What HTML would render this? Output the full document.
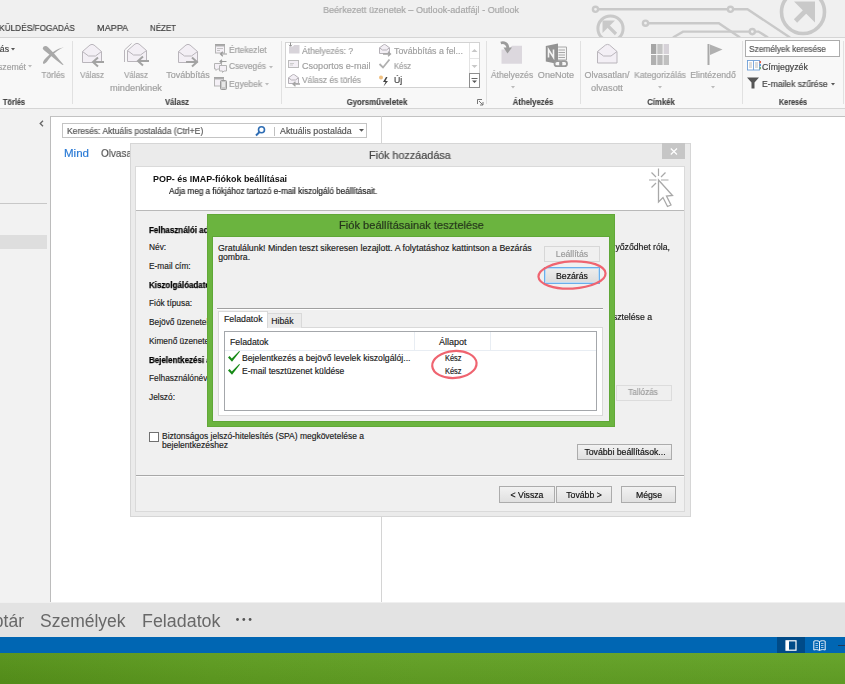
<!DOCTYPE html>
<html><head><meta charset="utf-8">
<style>
html,body{margin:0;padding:0;}
body{width:845px;height:684px;overflow:hidden;position:relative;background:#f0f0f0;font-family:"Liberation Sans", sans-serif;}
.t{position:absolute;white-space:nowrap;line-height:1;will-change:transform;}
.k{-webkit-text-stroke:0.25px currentColor}
svg{overflow:visible}
</style></head><body>
<div style="position:absolute;left:0px;top:0px;width:845px;height:37px;background:#f0f0f0"></div>
<svg style="position:absolute;left:0px;top:0px;" width="845" height="37" viewBox="0 0 845 37">
<g fill="none" stroke="#c9c9c9" stroke-width="2.4">
<path d="M598 9.3 H728"/><circle cx="595.5" cy="9.3" r="2.6"/>
<path d="M733 9.3 H747.5 L790 37.5"/><circle cx="730.5" cy="9.3" r="2.6"/>
<path d="M648 23.2 H718.8 L740 37.5"/><circle cx="645.5" cy="23.2" r="2.6"/>
<path d="M673 37.5 L683 31.6 H749.5"/><path d="M755 31.6 H758.5 L768 37.5"/><circle cx="752.3" cy="31.6" r="2.6"/>
<circle cx="610.5" cy="28.5" r="12.6" stroke-width="3"/>
<circle cx="803" cy="12" r="21.5" stroke-width="3.6"/>
</g>
<g fill="#c9c9c9">
<path d="M602.5 20.5 H615 L602.5 33 Z"/><path d="M606 24 L616 34" stroke="#c9c9c9" stroke-width="3.2"/>
<path d="M794 1.5 H815 V22.5 Z"/><path d="M807 9.5 L795.5 21" stroke="#c9c9c9" stroke-width="4.6"/>
</g></svg>
<div class="t" style="left:121.30000000000001px;width:600px;text-align:center;top:5.55px;font-size:9.1px;color:#a6a6a6;font-weight:normal;-webkit-text-stroke:0.18px #a6a6a6;transform:scaleX(0.9987);transform-origin:center 0;">Beérkezett üzenetek – Outlook-adatfájl - Outlook</div>
<div class="t" style="left:-525.5px;width:600px;text-align:right;top:24.46px;font-size:9.2px;color:#3c3c3c;font-weight:normal;-webkit-text-stroke:0.18px #3c3c3c;transform:scaleX(0.9010);transform-origin:right 0;">KÜLDÉS/FOGADÁS</div>
<div class="t" style="left:96.6px;top:24.46px;font-size:9.2px;color:#3c3c3c;font-weight:normal;-webkit-text-stroke:0.18px #3c3c3c;transform:scaleX(0.9896);transform-origin:left 0;">MAPPA</div>
<div class="t" style="left:149.6px;top:24.46px;font-size:9.2px;color:#3c3c3c;font-weight:normal;-webkit-text-stroke:0.18px #3c3c3c;transform:scaleX(0.8622);transform-origin:left 0;">NÉZET</div>
<div style="position:absolute;left:0px;top:37px;width:845px;height:1px;background:#d5d5d5"></div>
<div style="position:absolute;left:0px;top:38px;width:845px;height:70px;background:#f8f8f8"></div>
<div style="position:absolute;left:0px;top:108px;width:845px;height:1px;background:#d5d5d5"></div>
<div style="position:absolute;left:72px;top:41px;width:1px;height:63px;background:#e1e1e1"></div>
<div style="position:absolute;left:280.5px;top:41px;width:1px;height:63px;background:#e1e1e1"></div>
<div style="position:absolute;left:486px;top:41px;width:1px;height:63px;background:#e1e1e1"></div>
<div style="position:absolute;left:579.5px;top:41px;width:1px;height:63px;background:#e1e1e1"></div>
<div style="position:absolute;left:742px;top:41px;width:1px;height:63px;background:#e1e1e1"></div>
<div style="position:absolute;left:843px;top:41px;width:1px;height:63px;background:#e1e1e1"></div>
<div class="t" style="left:-285.6px;width:600px;text-align:center;top:98.02px;font-size:8.3px;color:#444;font-weight:bold;-webkit-text-stroke:0.15px #444;transform:scaleX(0.8873);transform-origin:center 0;">Törlés</div>
<div class="t" style="left:-123.5px;width:600px;text-align:center;top:98.02px;font-size:8.3px;color:#444;font-weight:bold;-webkit-text-stroke:0.15px #444;transform:scaleX(0.9288);transform-origin:center 0;">Válasz</div>
<div class="t" style="left:77.39999999999998px;width:600px;text-align:center;top:98.02px;font-size:8.3px;color:#444;font-weight:bold;-webkit-text-stroke:0.15px #444;transform:scaleX(0.9413);transform-origin:center 0;">Gyorsműveletek</div>
<div class="t" style="left:232.5px;width:600px;text-align:center;top:98.02px;font-size:8.3px;color:#444;font-weight:bold;-webkit-text-stroke:0.15px #444;transform:scaleX(0.9316);transform-origin:center 0;">Áthelyezés</div>
<div class="t" style="left:360.79999999999995px;width:600px;text-align:center;top:98.02px;font-size:8.3px;color:#444;font-weight:bold;-webkit-text-stroke:0.15px #444;transform:scaleX(0.9347);transform-origin:center 0;">Címkék</div>
<div class="t" style="left:492.5px;width:600px;text-align:center;top:98.02px;font-size:8.3px;color:#444;font-weight:bold;-webkit-text-stroke:0.15px #444;transform:scaleX(0.8668);transform-origin:center 0;">Keresés</div>
<svg style="position:absolute;left:477px;top:99px;" width="7" height="6" viewBox="0 0 7 6"><path d="M0.5 0.5 H5 M0.5 0.5 V5" stroke="#777" fill="none"/><path d="M2 2 L6 6 M6 3 V6 H3" stroke="#777" fill="none"/></svg>
<div class="t" style="left:-590.6px;width:600px;text-align:right;top:45.39px;font-size:8.7px;color:#444;font-weight:normal;-webkit-text-stroke:0.18px #444;">itás</div>
<svg style="position:absolute;left:11px;top:48px;" width="4" height="3" viewBox="0 0 4 3"><path d="M0 0 H4 L2 2.5 Z" fill="#555"/></svg>
<div class="t" style="left:-574.1px;width:600px;text-align:right;top:62.99px;font-size:8.7px;color:#a0a0a0;font-weight:normal;-webkit-text-stroke:0.18px #a0a0a0;">Levélszemét</div>
<svg style="position:absolute;left:28.4px;top:65.3px;" width="4" height="3" viewBox="0 0 4 3"><path d="M0 0 H4 L2 2.5 Z" fill="#bbb"/></svg>
<svg style="position:absolute;left:42px;top:45px;" width="23" height="21" viewBox="0 0 23 21"><path d="M0.8 3.2 C1.5 0.6 4.2 0.4 6.3 2.4 C11 7 16.5 13.5 21.6 19.8 C20.6 20.2 19.8 19.6 18.6 18.6 C13 14 7 9 2.3 5.4 C1.2 4.6 0.7 3.9 0.8 3.2 Z" fill="#a9a9a9"/>
<path d="M21.8 2.2 C16 4.6 9.5 10 5.8 15.6 C4.5 17.8 2 19.6 1.2 18.6 C0.4 17.4 1.6 15.6 3.2 13.8 C8.5 8 15 3.6 21.8 2.2 Z" fill="#a9a9a9"/></svg>
<div class="t" style="left:-246.7px;width:600px;text-align:center;top:70.89px;font-size:8.7px;color:#a0a0a0;font-weight:normal;-webkit-text-stroke:0.18px #a0a0a0;transform:scaleX(0.9639);transform-origin:center 0;">Törlés</div>
<svg style="position:absolute;left:82px;top:44px;" width="26" height="24" viewBox="0 0 26 24"><g transform="translate(0,0)"><path d="M0.5 7.5 L8 1 Q10 -0.3 12 1 L19.5 7.5 V18.5 H0.5 Z" fill="#f3eff5" stroke="#b9b5bb"/>
<path d="M0.5 7.5 L6.5 12 H13.5 L19.5 7.5" fill="none" stroke="#b9b5bb"/></g><path d="M11 18 H22 M16 13.5 L11 18 L16 22.5" stroke="#a3a3a3" stroke-width="2" fill="none"/></svg>
<div class="t" style="left:-208px;width:600px;text-align:center;top:70.89px;font-size:8.7px;color:#a0a0a0;font-weight:normal;-webkit-text-stroke:0.18px #a0a0a0;transform:scaleX(0.9191);transform-origin:center 0;">Válasz</div>
<svg style="position:absolute;left:124px;top:43px;" width="26" height="24" viewBox="0 0 26 24"><path d="M0.5 19 V7 L7.5 0.5" stroke="#b9b5bb" fill="none"/><g transform="translate(3,0)"><path d="M0.5 7.5 L8 1 Q10 -0.3 12 1 L19.5 7.5 V18.5 H0.5 Z" fill="#f3eff5" stroke="#b9b5bb"/>
<path d="M0.5 7.5 L6.5 12 H13.5 L19.5 7.5" fill="none" stroke="#b9b5bb"/></g><path d="M14 18 H25 M19 13.5 L14 18 L19 22.5" stroke="#a3a3a3" stroke-width="2" fill="none"/></svg>
<div class="t" style="left:-164px;width:600px;text-align:center;top:70.89px;font-size:8.7px;color:#a0a0a0;font-weight:normal;-webkit-text-stroke:0.18px #a0a0a0;transform:scaleX(0.9191);transform-origin:center 0;">Válasz</div>
<div class="t" style="left:-164.2px;width:600px;text-align:center;top:83.69px;font-size:8.7px;color:#a0a0a0;font-weight:normal;-webkit-text-stroke:0.18px #a0a0a0;transform:scaleX(1.0646);transform-origin:center 0;">mindenkinek</div>
<svg style="position:absolute;left:178px;top:44px;" width="26" height="24" viewBox="0 0 26 24"><g transform="translate(0,0)"><path d="M0.5 7.5 L8 1 Q10 -0.3 12 1 L19.5 7.5 V18.5 H0.5 Z" fill="#f3eff5" stroke="#b9b5bb"/>
<path d="M0.5 7.5 L6.5 12 H13.5 L19.5 7.5" fill="none" stroke="#b9b5bb"/></g><path d="M8 18 H19 M14 13.5 L19 18 L14 22.5" stroke="#a3a3a3" stroke-width="2" fill="none"/></svg>
<div class="t" style="left:-112.1px;width:600px;text-align:center;top:70.89px;font-size:8.7px;color:#a0a0a0;font-weight:normal;-webkit-text-stroke:0.18px #a0a0a0;transform:scaleX(1.0338);transform-origin:center 0;">Továbbítás</div>
<svg style="position:absolute;left:214px;top:44px;" width="14" height="12" viewBox="0 0 14 12"><rect x="1" y="0" width="10" height="2" fill="#a4a4a4"/><rect x="1.5" y="2" width="9" height="7" fill="#f4f0f6" stroke="#b4b4b4"/><path d="M3 4.5 H9 M3 6.5 H6" stroke="#c4c4c4"/><path d="M6.5 10 H13 M8.8 7.8 L6.5 10 L8.8 12.2" stroke="#9a9a9a" stroke-width="1.2" fill="none"/></svg>
<div class="t" style="left:229px;top:45.99px;font-size:8.7px;color:#a0a0a0;font-weight:normal;-webkit-text-stroke:0.18px #a0a0a0;transform:scaleX(0.9694);transform-origin:left 0;">Értekezlet</div>
<svg style="position:absolute;left:214px;top:60px;" width="14" height="13" viewBox="0 0 14 13"><path d="M0.5 3.5 H7.5 V9 H3.5 L2 10.5 V9 H0.5 Z" fill="#f4f0f6" stroke="#b4b4b4"/><path d="M5.5 5.5 H12.5 V11 H10 L8.5 12.5 V11 H5.5 Z" fill="#f4f0f6" stroke="#b4b4b4"/><path d="M6 1.5 H12.5 M8 -0.3 L6 1.5 L8 3.3" stroke="#9a9a9a" stroke-width="1.2" fill="none"/></svg>
<div class="t" style="left:229px;top:62.49px;font-size:8.7px;color:#a0a0a0;font-weight:normal;-webkit-text-stroke:0.18px #a0a0a0;transform:scaleX(0.9564);transform-origin:left 0;">Csevegés</div>
<svg style="position:absolute;left:268.5px;top:66px;" width="4" height="3" viewBox="0 0 4 3"><path d="M0 0 H4 L2 2.5 Z" fill="#bbb"/></svg>
<svg style="position:absolute;left:214px;top:77px;" width="14" height="13" viewBox="0 0 14 13"><rect x="0" y="0" width="10" height="2" fill="#a4a4a4"/><rect x="0.5" y="2" width="9" height="7" fill="#f4f0f6" stroke="#b4b4b4"/><rect x="6.5" y="3.5" width="6" height="9" rx="1" fill="#c8c8c8" stroke="#9a9a9a"/><rect x="8" y="5" width="3" height="5" fill="#e8e8e8"/></svg>
<div class="t" style="left:229px;top:80.19px;font-size:8.7px;color:#a0a0a0;font-weight:normal;-webkit-text-stroke:0.18px #a0a0a0;transform:scaleX(0.9806);transform-origin:left 0;">Egyebek</div>
<svg style="position:absolute;left:264.5px;top:83px;" width="4" height="3" viewBox="0 0 4 3"><path d="M0 0 H4 L2 2.5 Z" fill="#bbb"/></svg>
<div style="position:absolute;left:285px;top:42px;width:195px;height:46px;background:#fff;border:1px solid #d2d2d2;box-sizing:border-box"></div>
<div style="position:absolute;left:469px;top:43px;width:1px;height:44px;background:#e3e3e3"></div>
<div style="position:absolute;left:470px;top:58px;width:9px;height:1px;background:#e6e6e6"></div>
<div style="position:absolute;left:470px;top:73px;width:9px;height:1px;background:#e6e6e6"></div>
<svg style="position:absolute;left:471px;top:48px;" width="7" height="5" viewBox="0 0 7 5"><path d="M0.5 4 L3.5 1 L6.5 4 Z" fill="#c8c8c8"/></svg>
<svg style="position:absolute;left:471px;top:64px;" width="7" height="5" viewBox="0 0 7 5"><path d="M0.5 1 L3.5 4 L6.5 1 Z" fill="#c8c8c8"/></svg>
<div style="position:absolute;left:469px;top:73px;width:11px;height:15px;border:1px solid #8e8e8e;box-sizing:border-box"></div>
<svg style="position:absolute;left:471px;top:78px;" width="7" height="6" viewBox="0 0 7 6"><path d="M0.5 0.5 H6.5" stroke="#666"/><path d="M1 2.5 L3.5 5 L6 2.5 Z" fill="#555"/></svg>
<svg style="position:absolute;left:288px;top:42px;" width="13" height="12" viewBox="0 0 13 12"><path d="M1 4.5 H5 L6 3 H11.5 V11.5 H1 Z" fill="#d8d4da"/><path d="M2.5 0.5 V4 M1 2.8 L2.5 4.3 L4 2.8" stroke="#888" stroke-width="0.9" fill="none"/></svg>
<div class="t" style="left:302.4px;top:46.69px;font-size:8.7px;color:#a0a0a0;font-weight:normal;-webkit-text-stroke:0.18px #a0a0a0;transform:scaleX(0.9803);transform-origin:left 0;">Áthelyezés: ?</div>
<svg style="position:absolute;left:288px;top:60px;" width="12" height="8" viewBox="0 0 12 8"><rect x="0.5" y="0.5" width="10" height="7" fill="#f3eff5" stroke="#bbb"/><path d="M2 3.5 H6 M2 5 H5" stroke="#ccc"/></svg>
<div class="t" style="left:302.4px;top:61.89px;font-size:8.7px;color:#a0a0a0;font-weight:normal;-webkit-text-stroke:0.18px #a0a0a0;transform:scaleX(1.0433);transform-origin:left 0;">Csoportos e-mail</div>
<svg style="position:absolute;left:288px;top:74px;" width="13" height="12" viewBox="0 0 13 12"><path d="M0.5 3.8 L4.5 0.8 Q5.5 0.2 6.5 0.8 L10.5 3.8 V9.5 H0.5 Z" fill="#f3eff5" stroke="#b5b1b7"/><path d="M0.5 3.8 L3.5 6 H7.5 L10.5 3.8" stroke="#b5b1b7" fill="none"/><path d="M5 10 H12 M7.5 7.8 L5 10 L7.5 12.2" stroke="#a5a5a5" stroke-width="1.3" fill="none"/></svg>
<div class="t" style="left:302.4px;top:76.29px;font-size:8.7px;color:#a0a0a0;font-weight:normal;-webkit-text-stroke:0.18px #a0a0a0;transform:scaleX(0.9608);transform-origin:left 0;">Válasz és törlés</div>
<svg style="position:absolute;left:379px;top:44px;" width="13" height="12" viewBox="0 0 13 12"><path d="M0.5 3.8 L4.5 0.8 Q5.5 0.2 6.5 0.8 L10.5 3.8 V9.5 H0.5 Z" fill="#f3eff5" stroke="#b5b1b7"/><path d="M0.5 3.8 L3.5 6 H7.5 L10.5 3.8" stroke="#b5b1b7" fill="none"/><path d="M4 10 H11.5 M9 7.8 L11.5 10 L9 12.2" stroke="#a5a5a5" stroke-width="1.3" fill="none"/></svg>
<div class="t" style="left:394px;top:46.69px;font-size:8.7px;color:#a0a0a0;font-weight:normal;-webkit-text-stroke:0.18px #a0a0a0;transform:scaleX(1.0119);transform-origin:left 0;">Továbbítás a fel...</div>
<svg style="position:absolute;left:379px;top:59px;" width="11" height="10" viewBox="0 0 11 10"><path d="M0.5 5 L4 8.5 L10.5 0.5" stroke="#b0b0b0" stroke-width="1.8" fill="none"/></svg>
<div class="t" style="left:394px;top:61.89px;font-size:8.7px;color:#a0a0a0;font-weight:normal;-webkit-text-stroke:0.18px #a0a0a0;transform:scaleX(0.8789);transform-origin:left 0;">Kész</div>
<svg style="position:absolute;left:378px;top:75px;" width="13" height="12" viewBox="0 0 13 12"><circle cx="3" cy="2.5" r="2" fill="#f0c080"/><path d="M8 2 L5 7 H7.5 L5.5 11.5 L10 6 H7.5 L9.5 2 Z" fill="#444"/></svg>
<div class="t" style="left:394px;top:76.29px;font-size:8.7px;color:#444;font-weight:normal;-webkit-text-stroke:0.18px #444;">Új</div>
<svg style="position:absolute;left:500px;top:42px;" width="23" height="23" viewBox="0 0 23 23"><path d="M1.5 7.5 H8.5 L12 3.7 H22 V21.7 H1.5 Z" fill="#dcd8de"/><path d="M0.8 1 C4 0 8 1.5 7.8 6.5" stroke="#9c9c9c" stroke-width="2.8" fill="none"/><path d="M3.5 5.5 L12 5.5 L7.5 11.5 Z" fill="#9c9c9c"/></svg>
<div class="t" style="left:211.89999999999998px;width:600px;text-align:center;top:71.39px;font-size:8.7px;color:#a0a0a0;font-weight:normal;-webkit-text-stroke:0.18px #a0a0a0;transform:scaleX(0.9916);transform-origin:center 0;">Áthelyezés</div>
<svg style="position:absolute;left:510.5px;top:86px;" width="4" height="3" viewBox="0 0 4 3"><path d="M0 0 H4 L2 2.5 Z" fill="#bbb"/></svg>
<svg style="position:absolute;left:545px;top:43px;" width="24" height="26" viewBox="0 0 24 26"><path d="M11.5 4 H21.5 V17 H11.5 Z" fill="#f4f4f4" stroke="#a8a8a8"/><path d="M13.5 7 H20 M13.5 9.5 H20 M13.5 12 H20 M13.5 14.5 H20" stroke="#a8a8a8" stroke-width="1.1"/>
<path d="M0.8 3 L13 0.5 V21 L0.8 18.5 Z" fill="#939393"/><path d="M3.5 14.5 V6.5 L8.5 14.5 V6.5" stroke="#f4f4f4" stroke-width="1.6" fill="none"/>
<rect x="9.5" y="18.2" width="7" height="5" rx="2.5" fill="#f8f8f8" stroke="#9a9a9a" stroke-width="1.8"/><rect x="15" y="18.2" width="7" height="5" rx="2.5" fill="none" stroke="#9a9a9a" stroke-width="1.8"/></svg>
<div class="t" style="left:255.79999999999995px;width:600px;text-align:center;top:70.89px;font-size:8.7px;color:#a0a0a0;font-weight:normal;-webkit-text-stroke:0.18px #a0a0a0;transform:scaleX(1.0425);transform-origin:center 0;">OneNote</div>
<svg style="position:absolute;left:597px;top:44px;" width="21" height="20" viewBox="0 0 21 20"><path d="M0.5 7.5 L8.5 1 Q10.5 -0.2 12.5 1 L20 7.5 V19 H0.5 Z" fill="#f3eff5" stroke="#b9b5bb"/><path d="M0.5 7.5 L6.5 12 H14 L20 7.5" fill="none" stroke="#b9b5bb"/></svg>
<div class="t" style="left:307.20000000000005px;width:600px;text-align:center;top:71.39px;font-size:8.7px;color:#a0a0a0;font-weight:normal;-webkit-text-stroke:0.18px #a0a0a0;transform:scaleX(1.0317);transform-origin:center 0;">Olvasatlan/</div>
<div class="t" style="left:307.20000000000005px;width:600px;text-align:center;top:83.69px;font-size:8.7px;color:#a0a0a0;font-weight:normal;-webkit-text-stroke:0.18px #a0a0a0;transform:scaleX(1.0639);transform-origin:center 0;">olvasott</div>
<svg style="position:absolute;left:651px;top:44px;" width="18" height="21" viewBox="0 0 18 21"><rect x="0" y="0" width="5.3" height="10" fill="#a6a6a6"/><rect x="6.3" y="0" width="5.3" height="10" fill="#c4c4c4"/><rect x="12.6" y="0" width="5.4" height="10" fill="#d6d2d8"/>
<rect x="0" y="11" width="5.3" height="10" fill="#b0b0b0"/><rect x="6.3" y="11" width="5.3" height="10" fill="#b8b8b8"/><rect x="12.6" y="11" width="5.4" height="10" fill="#c0c0c0"/></svg>
<div class="t" style="left:360.1px;width:600px;text-align:center;top:71.39px;font-size:8.7px;color:#a0a0a0;font-weight:normal;-webkit-text-stroke:0.18px #a0a0a0;transform:scaleX(0.9827);transform-origin:center 0;">Kategorizálás</div>
<svg style="position:absolute;left:658px;top:86px;" width="4" height="3" viewBox="0 0 4 3"><path d="M0 0 H4 L2 2.5 Z" fill="#bbb"/></svg>
<svg style="position:absolute;left:707px;top:44px;" width="16" height="22" viewBox="0 0 16 22"><rect x="0.5" y="0" width="2" height="21" fill="#a9a9a9"/><path d="M3 0.5 L15.5 5.5 L3 11 Z" fill="#b0b0b0"/></svg>
<div class="t" style="left:413.4px;width:600px;text-align:center;top:71.39px;font-size:8.7px;color:#a0a0a0;font-weight:normal;-webkit-text-stroke:0.18px #a0a0a0;transform:scaleX(1.0029);transform-origin:center 0;">Elintézendő</div>
<svg style="position:absolute;left:711px;top:86px;" width="4" height="3" viewBox="0 0 4 3"><path d="M0 0 H4 L2 2.5 Z" fill="#bbb"/></svg>
<div style="position:absolute;left:745px;top:40px;width:95px;height:17px;background:#fff;border:1px solid #acacac;box-sizing:border-box"></div>
<div class="t" style="left:748.7px;top:45.29px;font-size:8.7px;color:#555;font-weight:normal;-webkit-text-stroke:0.18px #555;transform:scaleX(0.9593);transform-origin:left 0;">Személyek keresése</div>
<svg style="position:absolute;left:747px;top:60px;" width="14" height="11" viewBox="0 0 14 11"><rect x="0.5" y="0.5" width="12" height="9.5" fill="#fff" stroke="#6f9fd8" stroke-width="0.9"/><path d="M6.5 0.5 V10" stroke="#6f9fd8" stroke-width="0.9"/>
<path d="M2 3 H5 M2 5 H5 M2 7 H5 M8 3 H11 M8 5 H11 M8 7 H11" stroke="#b0b0b0" stroke-width="0.9"/><rect x="12.5" y="1" width="1.5" height="2.2" fill="#e06050"/><rect x="12.5" y="4" width="1.5" height="2.2" fill="#5a9ad8"/><rect x="12.5" y="7" width="1.5" height="2.2" fill="#70b070"/></svg>
<div class="t" style="left:762.4px;top:63.09px;font-size:8.7px;color:#444;font-weight:normal;-webkit-text-stroke:0.18px #444;transform:scaleX(1.0100);transform-origin:left 0;">Címjegyzék</div>
<svg style="position:absolute;left:747px;top:77px;" width="13" height="12" viewBox="0 0 13 12"><path d="M0 0.5 H12 L7.5 5.5 V11.5 H4.5 V5.5 Z" fill="#555"/></svg>
<div class="t" style="left:762.4px;top:79.59px;font-size:8.7px;color:#444;font-weight:normal;-webkit-text-stroke:0.18px #444;transform:scaleX(0.9862);transform-origin:left 0;">E-mailek szűrése</div>
<svg style="position:absolute;left:831px;top:83px;" width="4" height="3" viewBox="0 0 4 3"><path d="M0 0 H4 L2 2.5 Z" fill="#555"/></svg>
<div style="position:absolute;left:0px;top:109px;width:845px;height:493px;background:#f2f2f2"></div>
<div style="position:absolute;left:50px;top:116px;width:795px;height:486px;background:#fff;border-left:1px solid #bcbcbc;border-top:1px solid #c2c2c2;box-sizing:border-box"></div>
<svg style="position:absolute;left:39px;top:120px;" width="5" height="7" viewBox="0 0 5 7"><path d="M4 0.8 L1.2 3.5 L4 6.2" stroke="#666" stroke-width="1.3" fill="none"/></svg>
<div style="position:absolute;left:0px;top:203px;width:47px;height:1px;background:#c8c8c8"></div>
<div style="position:absolute;left:0px;top:235px;width:47px;height:14px;background:#dedede"></div>
<div style="position:absolute;left:381px;top:116px;width:1px;height:486px;background:#d4d4d4"></div>
<div style="position:absolute;left:62px;top:123px;width:305px;height:15px;background:#fff;border:1px solid #c4c4c4;box-sizing:border-box"></div>
<div class="t" style="left:67.3px;top:127.39px;font-size:8.7px;color:#555;font-weight:normal;-webkit-text-stroke:0.18px #555;transform:scaleX(0.9777);transform-origin:left 0;">Keresés: Aktuális postaláda (Ctrl+E)</div>
<svg style="position:absolute;left:255px;top:126px;" width="11" height="10" viewBox="0 0 11 10"><circle cx="6.5" cy="3.8" r="3" fill="none" stroke="#2e6db4" stroke-width="1.6"/><path d="M4.5 6 L1 9.5" stroke="#2e6db4" stroke-width="2"/></svg>
<div style="position:absolute;left:274px;top:127px;width:1px;height:9px;background:#c0c0c0"></div>
<div class="t" style="left:279.8px;top:127.39px;font-size:8.7px;color:#555;font-weight:normal;-webkit-text-stroke:0.18px #555;transform:scaleX(1.0154);transform-origin:left 0;">Aktuális postaláda</div>
<svg style="position:absolute;left:359px;top:129px;" width="5" height="3" viewBox="0 0 5 3"><path d="M0 0 H5 L2.5 2.8 Z" fill="#555"/></svg>
<div class="t" style="left:64px;top:147.72px;font-size:11.5px;color:#2a7ad5;font-weight:normal;-webkit-text-stroke:0.18px #2a7ad5;transform:scaleX(1.0030);transform-origin:left 0;">Mind</div>
<div class="t" style="left:101.4px;top:147.72px;font-size:11.5px;color:#555;font-weight:normal;transform:scaleX(0.86);transform-origin:left 0;-webkit-text-stroke:0.18px #555;">Olvasatlan</div>
<div style="position:absolute;left:0px;top:602.6px;width:845px;height:34.4px;background:#e3e3e3"></div>
<div class="t" style="left:-576.4px;width:600px;text-align:right;top:613.14px;font-size:17.5px;color:#686868;font-weight:normal;">Naptár</div>
<div class="t" style="left:40.3px;top:613.14px;font-size:17.5px;color:#686868;font-weight:normal;transform:scaleX(0.9955);transform-origin:left 0;">Személyek</div>
<div class="t" style="left:142.3px;top:613.14px;font-size:17.5px;color:#686868;font-weight:normal;transform:scaleX(1.0214);transform-origin:left 0;">Feladatok</div>
<svg style="position:absolute;left:236px;top:618px;" width="16" height="3" viewBox="0 0 16 3"><circle cx="1.5" cy="1.5" r="1.4" fill="#555"/><circle cx="7.8" cy="1.5" r="1.4" fill="#555"/><circle cx="14.1" cy="1.5" r="1.4" fill="#555"/></svg>
<div style="position:absolute;left:0px;top:637px;width:845px;height:16px;background:#0066b3"></div>
<div style="position:absolute;left:777px;top:637px;width:28px;height:16px;background:#004b88"></div>
<svg style="position:absolute;left:785px;top:640px;" width="12" height="11" viewBox="0 0 12 11"><rect x="1" y="0.8" width="10" height="9.4" fill="none" stroke="#fff" stroke-width="1.2"/><rect x="1" y="0.8" width="3" height="9.4" fill="#fff"/></svg>
<svg style="position:absolute;left:813px;top:640px;" width="13" height="11" viewBox="0 0 13 11"><path d="M6.5 1.5 C4.5 0.5 2.5 0.5 0.8 1.2 V10 C2.5 9.4 4.5 9.4 6.5 10.4 C8.5 9.4 10.5 9.4 12.2 10 V1.2 C10.5 0.5 8.5 0.5 6.5 1.5 Z M6.5 1.5 V10.4" fill="none" stroke="#e8f0f8" stroke-width="1"/><path d="M2.5 3.5 H5 M2.5 5.5 H5 M2.5 7.5 H5 M8 3.5 H10.5 M8 5.5 H10.5 M8 7.5 H10.5" stroke="#c8dcf0" stroke-width="0.8"/></svg>
<div style="position:absolute;left:838px;top:645px;width:7px;height:1px;background:#1e3a5a"></div>
<div style="position:absolute;left:0px;top:653px;width:845px;height:31px;background:linear-gradient(180deg,rgba(255,255,255,0.03),rgba(0,0,0,0.05)),linear-gradient(90deg,#56921a 0%,#5e9c20 25%,#62a024 50%,#63a226 100%)"></div>
<div style="position:absolute;left:130px;top:143px;width:561px;height:374px;background:#ebebeb;border:1px solid #d6d6d6;box-sizing:border-box"></div>
<div style="position:absolute;left:662px;top:143px;width:23px;height:16px;background:#c6c6c6"></div>
<svg style="position:absolute;left:670px;top:148px;" width="8" height="7" viewBox="0 0 8 7"><path d="M0.8 0.5 L7 6.5 M7 0.5 L0.8 6.5" stroke="#fff" stroke-width="1.2"/></svg>
<div class="t" style="left:369px;top:149.74px;font-size:11px;color:#444;font-weight:normal;-webkit-text-stroke:0.18px #444;transform:scaleX(0.9824);transform-origin:left 0;">Fiók hozzáadása</div>
<div style="position:absolute;left:135px;top:166px;width:550px;height:346px;background:#f0f0f0;border:1px solid #dadada;box-sizing:border-box"></div>
<div style="position:absolute;left:136px;top:167px;width:548px;height:43px;background:#fff"></div>
<div style="position:absolute;left:136px;top:210px;width:548px;height:1px;background:#b9b9b9"></div>
<div class="t" style="left:152.7px;top:175.39px;font-size:8.7px;color:#111;font-weight:bold;transform:scaleX(1.0288);transform-origin:left 0;">POP- és IMAP-fiókok beállításai</div>
<div class="t" style="left:169px;top:186.85px;font-size:8.5px;color:#222;font-weight:normal;-webkit-text-stroke:0.18px #222;transform:scaleX(0.9559);transform-origin:left 0;">Adja meg a fiókjához tartozó e-mail kiszolgáló beállításait.</div>
<svg style="position:absolute;left:646px;top:167px;" width="30" height="42" viewBox="0 0 30 42"><g stroke="#a8a8a8" stroke-width="1.2" fill="none">
<path d="M12.5 1.5 V9 M3 13 H10.5 M15 13 H22.5 M5.5 5.5 L10 10 M19.5 5.5 L15 10 M5.5 20.5 L10 16"/>
<path d="M12.5 13 V35 L17 30.5 L21.5 39.5 L25 38 L20.5 29 L26.5 28.5 Z" fill="#fff" stroke-width="1.3"/>
</g></svg>
<div class="t" style="left:148.9px;top:225.79px;font-size:8.7px;color:#000;font-weight:bold;-webkit-text-stroke:0.25px #000;transform:scaleX(0.9195);transform-origin:left 0;">Felhasználói adatok</div>
<div class="t" style="left:148.9px;top:243.09px;font-size:8.7px;color:#1a1a1a;font-weight:normal;-webkit-text-stroke:0.15px #1a1a1a;will-change:auto;transform:scaleX(0.9598);transform-origin:left 0;">Név:</div>
<div class="t" style="left:148.9px;top:262.19px;font-size:8.7px;color:#1a1a1a;font-weight:normal;-webkit-text-stroke:0.15px #1a1a1a;will-change:auto;transform:scaleX(0.9598);transform-origin:left 0;">E-mail cím:</div>
<div class="t" style="left:148.9px;top:281.49px;font-size:8.7px;color:#000;font-weight:bold;-webkit-text-stroke:0.25px #000;transform:scaleX(0.9195);transform-origin:left 0;">Kiszolgálóadatok</div>
<div class="t" style="left:148.9px;top:299.49px;font-size:8.7px;color:#1a1a1a;font-weight:normal;-webkit-text-stroke:0.15px #1a1a1a;will-change:auto;transform:scaleX(0.9598);transform-origin:left 0;">Fiók típusa:</div>
<div class="t" style="left:148.9px;top:317.69px;font-size:8.7px;color:#1a1a1a;font-weight:normal;-webkit-text-stroke:0.15px #1a1a1a;will-change:auto;transform:scaleX(0.9598);transform-origin:left 0;">Bejövő üzenetek kiszolgálója:</div>
<div class="t" style="left:148.9px;top:336.89px;font-size:8.7px;color:#1a1a1a;font-weight:normal;-webkit-text-stroke:0.15px #1a1a1a;will-change:auto;transform:scaleX(0.9598);transform-origin:left 0;">Kimenő üzenetek kiszolgálója (SMTP):</div>
<div class="t" style="left:148.9px;top:356.09px;font-size:8.7px;color:#000;font-weight:bold;-webkit-text-stroke:0.25px #000;transform:scaleX(0.9195);transform-origin:left 0;">Bejelentkezési adatok</div>
<div class="t" style="left:148.9px;top:373.69px;font-size:8.7px;color:#1a1a1a;font-weight:normal;-webkit-text-stroke:0.15px #1a1a1a;will-change:auto;transform:scaleX(0.9598);transform-origin:left 0;">Felhasználónév:</div>
<div class="t" style="left:148.9px;top:392.89px;font-size:8.7px;color:#1a1a1a;font-weight:normal;-webkit-text-stroke:0.15px #1a1a1a;will-change:auto;transform:scaleX(0.9598);transform-origin:left 0;">Jelszó:</div>
<div class="t" style="left:70.39999999999998px;width:600px;text-align:right;top:243.09px;font-size:8.7px;color:#1a1a1a;font-weight:normal;-webkit-text-stroke:0.18px #1a1a1a;">hogy meggyőződhet róla,</div>
<div class="t" style="left:51.700000000000045px;width:600px;text-align:right;top:312.79px;font-size:8.7px;color:#1a1a1a;font-weight:normal;-webkit-text-stroke:0.18px #1a1a1a;">A fiókbeállítások tesztelése a</div>
<div style="position:absolute;left:616px;top:385px;width:56px;height:16px;background:#efefef;border:1px solid #dcdcdc;box-sizing:border-box"></div>
<div class="t" style="left:343.29999999999995px;width:600px;text-align:center;top:388.49px;font-size:8.7px;color:#9a9a9a;font-weight:normal;-webkit-text-stroke:0.18px #9a9a9a;transform:scaleX(0.9481);transform-origin:center 0;">Tallózás</div>
<div style="position:absolute;left:149px;top:432px;width:10px;height:10px;background:#fff;border:1px solid #707070;box-sizing:border-box"></div>
<div class="t" style="left:161.8px;top:432.49px;font-size:8.7px;color:#1a1a1a;font-weight:normal;-webkit-text-stroke:0.15px #1a1a1a;will-change:auto;transform:scaleX(0.9759);transform-origin:left 0;">Biztonságos jelszó-hitelesítés (SPA) megkövetelése a</div>
<div class="t" style="left:161.8px;top:441.39px;font-size:8.7px;color:#1a1a1a;font-weight:normal;-webkit-text-stroke:0.15px #1a1a1a;will-change:auto;transform:scaleX(0.9847);transform-origin:left 0;">bejelentkezéshez</div>
<div style="position:absolute;left:136px;top:475px;width:548px;height:1px;background:#a8a8a8"></div>
<div style="position:absolute;left:136px;top:476px;width:548px;height:1px;background:#fafafa"></div>
<div style="position:absolute;left:577px;top:444px;width:95px;height:16px;background:linear-gradient(#f2f2f2,#e0e0e0);border:1px solid #acacac;box-sizing:border-box"></div>
<div class="t" style="left:324.5px;width:600px;text-align:center;top:448.29px;font-size:8.7px;color:#111;font-weight:normal;-webkit-text-stroke:0.18px #111;transform:scaleX(0.9994);transform-origin:center 0;">További beállítások...</div>
<div style="position:absolute;left:499px;top:486px;width:56px;height:17px;background:linear-gradient(#f2f2f2,#e0e0e0);border:1px solid #acacac;box-sizing:border-box"></div>
<div class="t" style="left:227.0px;width:600px;text-align:center;top:490.79px;font-size:8.7px;color:#111;font-weight:normal;-webkit-text-stroke:0.18px #111;">&lt; Vissza</div>
<div style="position:absolute;left:556px;top:486px;width:56px;height:17px;background:linear-gradient(#f2f2f2,#e0e0e0);border:1px solid #acacac;box-sizing:border-box"></div>
<div class="t" style="left:284.0px;width:600px;text-align:center;top:490.79px;font-size:8.7px;color:#111;font-weight:normal;-webkit-text-stroke:0.18px #111;">Tovább &gt;</div>
<div style="position:absolute;left:621px;top:486px;width:55px;height:17px;background:linear-gradient(#f2f2f2,#e0e0e0);border:1px solid #acacac;box-sizing:border-box"></div>
<div class="t" style="left:348.5px;width:600px;text-align:center;top:490.79px;font-size:8.7px;color:#111;font-weight:normal;-webkit-text-stroke:0.18px #111;">Mégse</div>
<div style="position:absolute;left:207px;top:214px;width:408px;height:213px;background:#6bb43f;border:1px solid #62a838;box-sizing:border-box"></div>
<div style="position:absolute;left:212px;top:236px;width:398px;height:186px;background:#5fa737"></div>
<div style="position:absolute;left:213px;top:237px;width:396px;height:184px;background:#f0f0f0"></div>
<div class="t" style="left:338.5px;top:220.45px;font-size:11.1px;color:#25351c;font-weight:normal;-webkit-text-stroke:0.18px #25351c;transform:scaleX(0.9987);transform-origin:left 0;">Fiók beállításainak tesztelése</div>
<div class="t" style="left:218.2px;top:244.29px;font-size:8.7px;color:#1a1a1a;font-weight:normal;-webkit-text-stroke:0.15px #1a1a1a;will-change:auto;transform:scaleX(1.0136);transform-origin:left 0;">Gratulálunk! Minden teszt sikeresen lezajlott. A folytatáshoz kattintson a Bezárás</div>
<div class="t" style="left:218.2px;top:253.49px;font-size:8.7px;color:#1a1a1a;font-weight:normal;-webkit-text-stroke:0.15px #1a1a1a;will-change:auto;">gombra.</div>
<div style="position:absolute;left:544px;top:246px;width:56px;height:16px;background:#f0f0f0;border:1px solid #d7d7d7;box-sizing:border-box"></div>
<div class="t" style="left:272.0px;width:600px;text-align:center;top:250.29px;font-size:8.7px;color:#999;font-weight:normal;-webkit-text-stroke:0.18px #999;">Leállítás</div>
<div style="position:absolute;left:544px;top:267px;width:56px;height:17px;background:linear-gradient(#ededed,#dcdcdc);border:1px solid #6aaeea;box-shadow:inset 0 0 0 1px #bcdcf6;box-sizing:border-box"></div>
<div class="t" style="left:272.0px;width:600px;text-align:center;top:271.79px;font-size:8.7px;color:#111;font-weight:normal;-webkit-text-stroke:0.18px #111;">Bezárás</div>
<div style="position:absolute;left:217px;top:308px;width:386px;height:1px;background:#a0a0a0"></div>
<div style="position:absolute;left:217px;top:309px;width:386px;height:1px;background:#fff"></div>
<div style="position:absolute;left:218px;top:327px;width:385px;height:89px;background:#fff;border:1px solid #d9d9d9;box-sizing:border-box"></div>
<div style="position:absolute;left:267px;top:313px;width:35px;height:15px;background:#ebebeb;border:1px solid #d9d9d9;border-bottom:none;box-sizing:border-box"></div>
<div style="position:absolute;left:218px;top:311px;width:50px;height:17px;background:#fff;border:1px solid #d9d9d9;border-bottom:none;box-sizing:border-box"></div>
<div class="t" style="left:223.6px;top:315.39px;font-size:8.7px;color:#1a1a1a;font-weight:normal;-webkit-text-stroke:0.15px #1a1a1a;will-change:auto;transform:scaleX(1.0103);transform-origin:left 0;">Feladatok</div>
<div class="t" style="left:271.3px;top:317.09px;font-size:8.7px;color:#1a1a1a;font-weight:normal;-webkit-text-stroke:0.15px #1a1a1a;will-change:auto;">Hibák</div>
<div style="position:absolute;left:224px;top:331px;width:373px;height:80px;background:#fff;border:1px solid #a4a7ab;box-sizing:border-box"></div>
<div style="position:absolute;left:225px;top:350px;width:371px;height:1px;background:#e8edf3"></div>
<div style="position:absolute;left:414px;top:332px;width:1px;height:18px;background:#e8edf3"></div>
<div style="position:absolute;left:490px;top:332px;width:1px;height:18px;background:#e8edf3"></div>
<div class="t" style="left:229.9px;top:338.09px;font-size:8.7px;color:#1a1a1a;font-weight:normal;-webkit-text-stroke:0.15px #1a1a1a;will-change:auto;transform:scaleX(1.0077);transform-origin:left 0;">Feladatok</div>
<div class="t" style="left:438.6px;top:338.09px;font-size:8.7px;color:#1a1a1a;font-weight:normal;-webkit-text-stroke:0.15px #1a1a1a;will-change:auto;transform:scaleX(1.0375);transform-origin:left 0;">Állapot</div>
<svg style="position:absolute;left:228px;top:351px;" width="12" height="11" viewBox="0 0 12 11"><path d="M0 6.4 L1.6 5 L3.8 7.6 L11.2 0 L12 0.6 L4 10.8 Z" fill="#168a16"/></svg>
<svg style="position:absolute;left:228px;top:364px;" width="12" height="11" viewBox="0 0 12 11"><path d="M0 6.4 L1.6 5 L3.8 7.6 L11.2 0 L12 0.6 L4 10.8 Z" fill="#168a16"/></svg>
<div class="t" style="left:241.8px;top:354.09px;font-size:8.7px;color:#1a1a1a;font-weight:normal;-webkit-text-stroke:0.15px #1a1a1a;will-change:auto;transform:scaleX(0.9995);transform-origin:left 0;">Bejelentkezés a bejövő levelek kiszolgálój...</div>
<div class="t" style="left:241.8px;top:367.39px;font-size:8.7px;color:#1a1a1a;font-weight:normal;-webkit-text-stroke:0.15px #1a1a1a;will-change:auto;transform:scaleX(0.9859);transform-origin:left 0;">E-mail tesztüzenet küldése</div>
<div class="t" style="left:444.7px;top:354.09px;font-size:8.7px;color:#1a1a1a;font-weight:normal;-webkit-text-stroke:0.15px #1a1a1a;will-change:auto;transform:scaleX(0.8583);transform-origin:left 0;">Kész</div>
<div class="t" style="left:444.7px;top:367.39px;font-size:8.7px;color:#1a1a1a;font-weight:normal;-webkit-text-stroke:0.15px #1a1a1a;will-change:auto;transform:scaleX(0.8583);transform-origin:left 0;">Kész</div>
<svg style="position:absolute;left:536px;top:259px;" width="72" height="32" viewBox="0 0 72 32"><ellipse cx="36" cy="16" rx="33.6" ry="13.6" fill="none" stroke="#ef6470" stroke-width="2.2" transform="rotate(-3 36 16)"/></svg>
<svg style="position:absolute;left:430px;top:348px;" width="49" height="32" viewBox="0 0 49 32"><ellipse cx="24.4" cy="16.5" rx="22.2" ry="13.5" fill="none" stroke="#ef6470" stroke-width="2.2" transform="rotate(-4 24.4 16.5)"/></svg>
</body></html>
